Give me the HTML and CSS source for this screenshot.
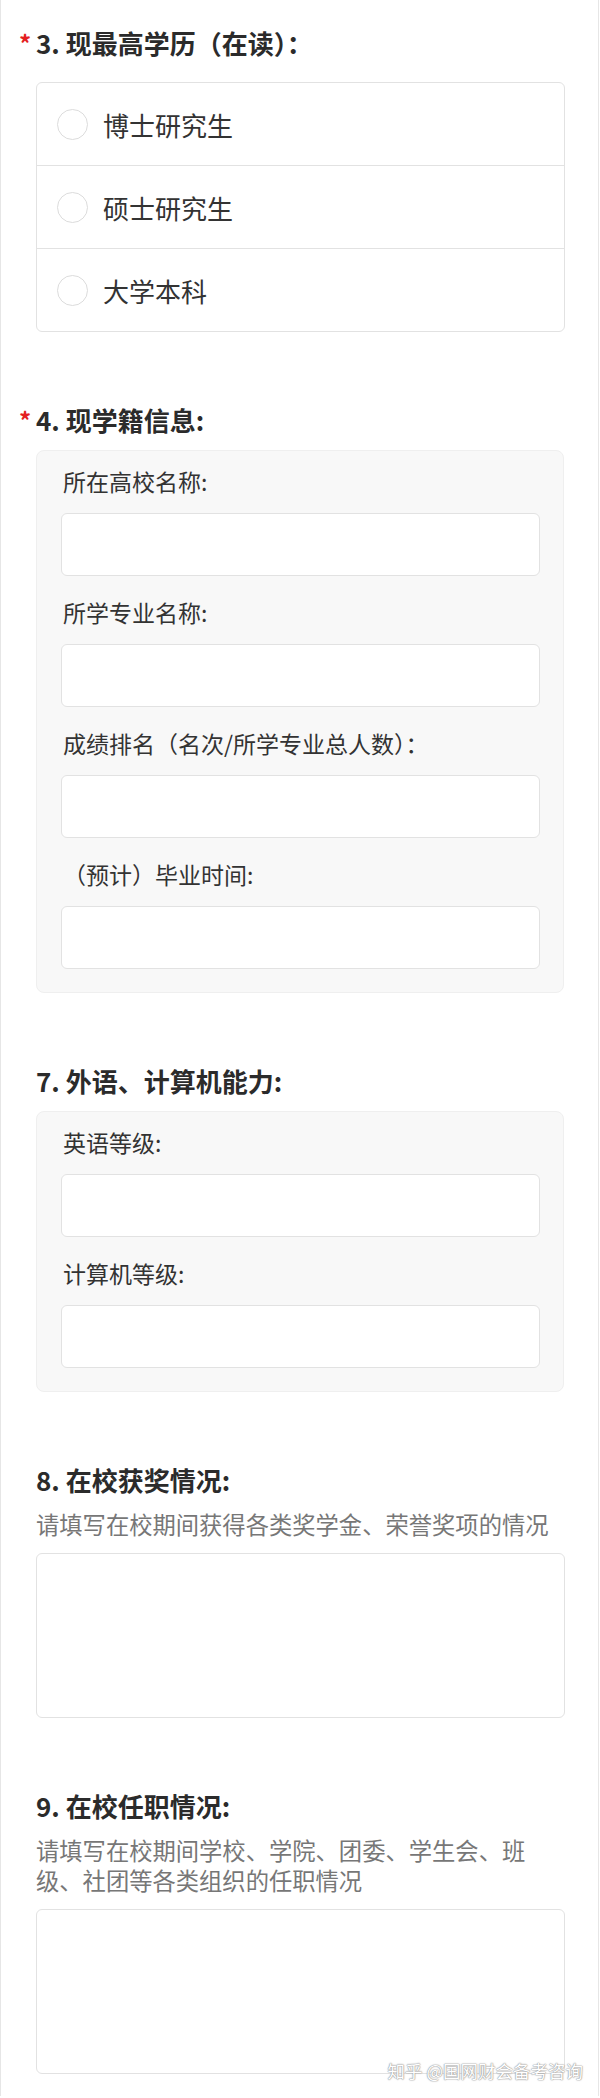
FILE: index.html
```html
<!DOCTYPE html>
<html lang="zh-CN">
<head>
    <meta charset="UTF-8">
    <meta name="viewport" content="width=device-width, initial-scale=1.0">
    <title>报名信息</title>
    <link rel="stylesheet" href="styles.css">
</head>
<body>
    <div class="page">
        <div class="question first">
            <h3 class="q-title"><span class="req">*</span>3. 现最高学历（在读）：</h3>
            <div class="radio-group">
                <label class="radio-row"><span class="circle"></span>博士研究生</label>
                <label class="radio-row"><span class="circle"></span>硕士研究生</label>
                <label class="radio-row"><span class="circle"></span>大学本科</label>
            </div>
        </div>

        <div class="question">
            <h3 class="q-title"><span class="req">*</span>4. 现学籍信息:</h3>
            <div class="field-box">
                <div class="field">
                    <div class="field-label">所在高校名称:</div>
                    <input type="text" class="field-input">
                </div>
                <div class="field">
                    <div class="field-label">所学专业名称:</div>
                    <input type="text" class="field-input">
                </div>
                <div class="field">
                    <div class="field-label">成绩排名（名次/所学专业总人数）：</div>
                    <input type="text" class="field-input">
                </div>
                <div class="field">
                    <div class="field-label">（预计）毕业时间:</div>
                    <input type="text" class="field-input">
                </div>
            </div>
        </div>

        <div class="question">
            <h3 class="q-title">7. 外语、计算机能力:</h3>
            <div class="field-box">
                <div class="field">
                    <div class="field-label">英语等级:</div>
                    <input type="text" class="field-input">
                </div>
                <div class="field">
                    <div class="field-label">计算机等级:</div>
                    <input type="text" class="field-input">
                </div>
            </div>
        </div>

        <div class="question">
            <h3 class="q-title">8. 在校获奖情况:</h3>
            <p class="hint">请填写在校期间获得各类奖学金、荣誉奖项的情况</p>
            <textarea class="area"></textarea>
        </div>

        <div class="question">
            <h3 class="q-title">9. 在校任职情况:</h3>
            <p class="hint">请填写在校期间学校、学院、团委、学生会、班级、社团等各类组织的任职情况</p>
            <textarea class="area"></textarea>
        </div>

        <div class="watermark">知乎 @国网财会备考咨询</div>
    </div>
</body>
</html>
```

FILE: styles.css
```css
body {
    margin: 0;
    background: #fff;
    font-family: "Noto Sans CJK SC", "Noto Sans", sans-serif;
    color: #333;
}
.page {
    position: relative;
    width: 562px;
    border-left: 1px solid #e6e6e6;
    border-right: 1px solid #e6e6e6;
    padding: 25px 0 22px 35px;
}
.question {
    margin-top: 70px;
}
.question.first {
    margin-top: 0;
}
.q-title {
    margin: 0;
    font-size: 26px;
    line-height: 36px;
    font-weight: 700;
    color: #2b2b2b;
}
.req {
    display: inline-block;
    width: 17px;
    margin-left: -17px;
    color: #e41f1f;
    font-size: 24px;
    font-weight: 700;
    vertical-align: top;
    line-height: 36px;
}
.radio-group {
    margin-top: 21px;
    border: 1px solid #e2e2e2;
    border-radius: 6px;
    width: 527px;
}
.radio-row {
    display: flex;
    align-items: center;
    height: 82px;
    padding-left: 20px;
    font-size: 26px;
    color: #333;
    border-bottom: 1px solid #e2e2e2;
}
.radio-row:last-child {
    border-bottom: none;
}
.circle {
    width: 29px;
    height: 29px;
    border: 1.5px solid #dcdcdc;
    border-radius: 50%;
    margin-right: 15px;
    background: #fff;
}
.field-box {
    margin-top: 12px;
    width: 477px;
    background: #f8f8f8;
    border: 1px solid #efefef;
    border-radius: 8px;
    padding: 12px 25px 23px 24px;
    display: flex;
    flex-direction: column;
    gap: 18px;
}
.field-label {
    font-size: 23px;
    line-height: 36px;
    padding-left: 2px;
    color: #333;
}
.field-input {
    display: block;
    box-sizing: border-box;
    width: 479px;
    height: 63px;
    margin-top: 14px;
    border: 1.5px solid #e2e2e2;
    border-radius: 6px;
    background: #fff;
    font-size: 22px;
    outline: none;
}
.hint {
    margin: 11px 0 0;
    width: 529px;
    font-size: 23.3px;
    line-height: 30px;
    color: #777;
}
.area {
    display: block;
    box-sizing: border-box;
    width: 529px;
    height: 165px;
    margin-top: 14px;
    border: 1.5px solid #e2e2e2;
    border-radius: 6px;
    background: #fff;
    resize: none;
    font-family: inherit;
    outline: none;
}
.watermark {
    position: absolute;
    right: 15px;
    bottom: 14px;
    font-size: 17.5px;
    line-height: 22px;
    color: #fff;
    text-shadow: 0 0 1px #999, 0 0 1px #999, 0 0 2px #aaa;
    white-space: nowrap;
}
```
